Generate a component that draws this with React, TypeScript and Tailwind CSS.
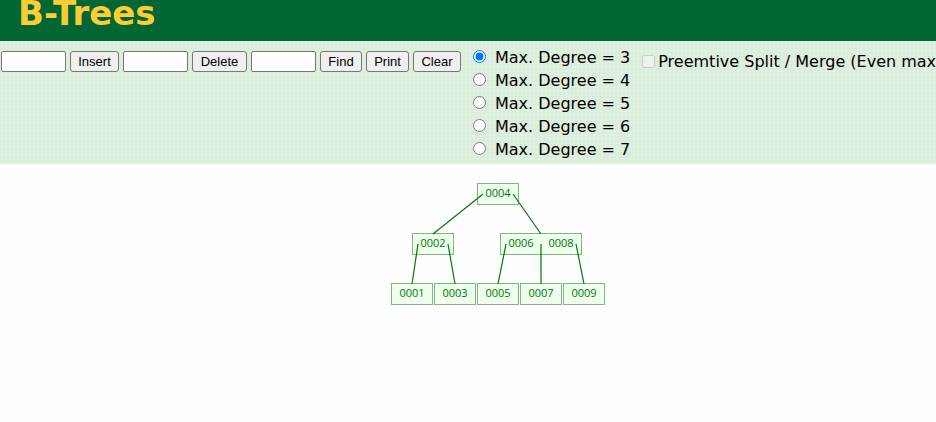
import { useState } from "react";

const DEGREES = [3, 4, 5, 6, 7];

const NODES = [
  { x: 477, y: 183, keys: ["0004"] },
  { x: 412, y: 233, keys: ["0002"] },
  { x: 500, y: 233, keys: ["0006", "0008"] },
  { x: 391, y: 283, keys: ["0001"] },
  { x: 434, y: 283, keys: ["0003"] },
  { x: 477, y: 283, keys: ["0005"] },
  { x: 520, y: 283, keys: ["0007"] },
  { x: 563, y: 283, keys: ["0009"] },
];

const EDGES = [
  [483, 194, 433, 234],
  [513, 194, 541, 234],
  [418, 244, 412, 284],
  [448, 244, 455, 284],
  [506, 244, 498, 284],
  [541, 244, 541, 284],
  [576, 244, 584, 284],
];

function Field({ label }: { label: string }) {
  return (
    <input
      type="text"
      aria-label={label}
      className="h-[21px] w-[65px] rounded-xs border border-[#767676] bg-white px-0.5 font-['Liberation_Sans',sans-serif] text-[13px]"
    />
  );
}

function ActionButton({ children, width }: { children: string; width: string }) {
  return (
    <button
      type="button"
      className={`h-[21px] rounded-[3px] border border-[#767676] bg-[#efefef] text-center font-['Liberation_Sans',sans-serif] text-[13px] leading-[19px] text-black ${width}`}
    >
      {children}
    </button>
  );
}

function Tree() {
  return (
    <svg
      viewBox="380 164 236 150"
      className="h-[150px] w-[236px]"
      role="img"
      aria-label="B-Tree"
    >
      {NODES.map((n) => {
        const width = n.keys.length === 1 ? 41 : 81;
        return (
          <g key={n.keys[0]}>
            <rect
              x={n.x + 0.5}
              y={n.y + 0.5}
              width={width}
              height={21}
              fill="#eeffee"
              stroke="#7fb77f"
            />
            {n.keys.map((key, i) => (
              <text
                key={key}
                x={n.x + 21 + i * 40}
                y={n.y + 14}
                textAnchor="middle"
                fill="#007700"
                className="font-['Open_Sans',sans-serif] text-[11px]"
              >
                {key}
              </text>
            ))}
          </g>
        );
      })}
      {EDGES.map(([x1, y1, x2, y2]) => (
        <line
          key={`${x1}-${y1}`}
          x1={x1}
          y1={y1}
          x2={x2}
          y2={y2}
          stroke="#007700"
          strokeWidth={1.2}
        />
      ))}
    </svg>
  );
}

export default function App() {
  const [degree, setDegree] = useState(3);

  return (
    <div className="min-h-screen overflow-hidden bg-[#fefefe] font-['DejaVu_Sans',sans-serif] text-base text-black">
      <header className="flex h-[41px] items-end bg-[#006633] px-[18px] pb-2">
        <h1 className="text-[34px] leading-10 font-bold text-[#ffcc33]">B-Trees</h1>
      </header>

      <div className="flex items-start bg-[#dbeddb] bg-[radial-gradient(#e1f1e2_1px,transparent_1px)] bg-size-[4px_4px] py-1 pl-px whitespace-nowrap">
        <div className="flex shrink-0 gap-1 pt-1.5">
          <Field label="Value to insert" />
          <ActionButton width="w-[49px]">Insert</ActionButton>
          <Field label="Value to delete" />
          <ActionButton width="w-[55px]">Delete</ActionButton>
          <Field label="Value to find" />
          <ActionButton width="w-[42px]">Find</ActionButton>
          <ActionButton width="w-[43px]">Print</ActionButton>
          <ActionButton width="w-[48px]">Clear</ActionButton>
        </div>

        <div className="ml-3 shrink-0">
          {DEGREES.map((d) => (
            <label key={d} className="flex h-[23px] items-center gap-[9px]">
              <input
                type="radio"
                name="degree"
                checked={degree === d}
                onChange={() => setDegree(d)}
                className="size-[13px]"
              />
              <span className="pt-0.5">Max. Degree = {d}</span>
            </label>
          ))}
        </div>

        <label className="ml-3 flex shrink-0 items-center gap-[3px] pt-[3px]">
          <input type="checkbox" disabled className="size-[13px]" />
          <span className="pt-0.5">Preemtive Split / Merge (Even max</span>
        </label>
      </div>

      <main className="flex justify-center pl-[60px]">
        <Tree />
      </main>
    </div>
  );
}
